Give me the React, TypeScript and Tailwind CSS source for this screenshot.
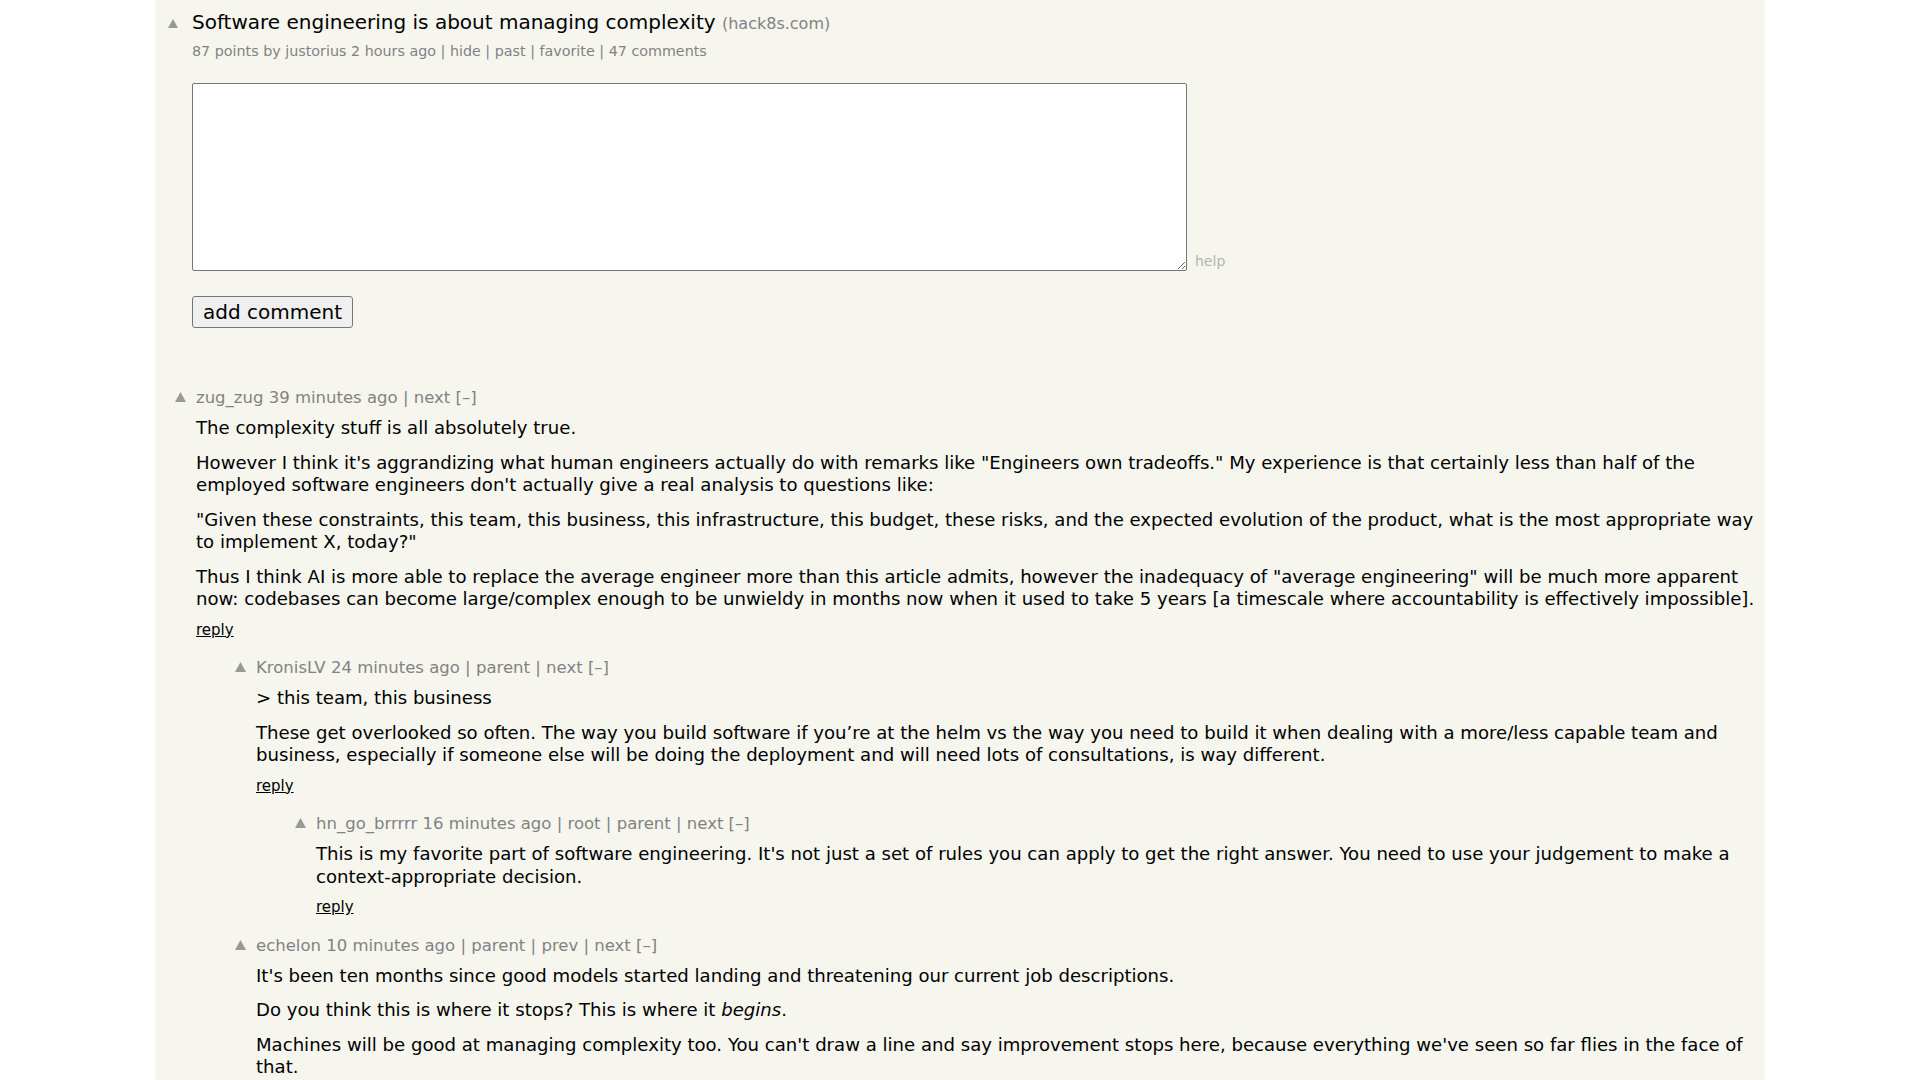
import React from 'react';

type Comment = {
  user: string;
  age: string;
  links: string[];
  level: number;
  paras: React.ReactNode[];
};

const comments: Comment[] = [
  {
    user: 'zug_zug',
    age: '39 minutes ago',
    links: ['next [–]'],
    level: 0,
    paras: [
      'The complexity stuff is all absolutely true.',
      'However I think it\'s aggrandizing what human engineers actually do with remarks like "Engineers own tradeoffs." My experience is that certainly less than half of the employed software engineers don\'t actually give a real analysis to questions like:',
      '"Given these constraints, this team, this business, this infrastructure, this budget, these risks, and the expected evolution of the product, what is the most appropriate way to implement X, today?"',
      'Thus I think AI is more able to replace the average engineer more than this article admits, however the inadequacy of "average engineering" will be much more apparent now: codebases can become large/complex enough to be unwieldy in months now when it used to take 5 years [a timescale where accountability is effectively impossible].',
    ],
  },
  {
    user: 'KronisLV',
    age: '24 minutes ago',
    links: ['parent', 'next [–]'],
    level: 1,
    paras: [
      '> this team, this business',
      'These get overlooked so often. The way you build software if you’re at the helm vs the way you need to build it when dealing with a more/less capable team and business, especially if someone else will be doing the deployment and will need lots of consultations, is way different.',
    ],
  },
  {
    user: 'hn_go_brrrrr',
    age: '16 minutes ago',
    links: ['root', 'parent', 'next [–]'],
    level: 2,
    paras: [
      "This is my favorite part of software engineering. It's not just a set of rules you can apply to get the right answer. You need to use your judgement to make a context-appropriate decision.",
    ],
  },
  {
    user: 'echelon',
    age: '10 minutes ago',
    links: ['parent', 'prev', 'next [–]'],
    level: 1,
    paras: [
      "It's been ten months since good models started landing and threatening our current job descriptions.",
      <>
        Do you think this is where it stops? This is where it <i>begins</i>.
      </>,
      "Machines will be good at managing complexity too. You can't draw a line and say improvement stops here, because everything we've seen so far flies in the face of that.",
    ],
  },
];

const indents: Record<number, string> = {
  0: 'pl-[20px]',
  1: 'pl-[80px]',
  2: 'pl-[140px]',
};

const VoteArrow: React.FC<{ small?: boolean }> = ({ small }) => (
  <svg
    width={small ? 10 : 11}
    height={small ? 9 : 10}
    viewBox="0 0 10 9"
    className="block"
  >
    <polygon points="5,0 10,9 0,9" fill="#999999" />
  </svg>
);

const CommentRow: React.FC<{ c: Comment }> = ({ c }) => (
  <div className={`flex ${indents[c.level]} mb-[19px]`}>
    <div className="w-[11px] shrink-0 pt-[4px]">
      <VoteArrow />
    </div>
    <div className="ml-[10px] flex-1 pr-[3px]">
      <div className="text-[16.5px] leading-[19px] text-[#828282]">
        {c.user} {c.age}
        {c.links.map((l) => (
          <span key={l}> | {l}</span>
        ))}
      </div>
      <div className="mt-[10px] text-[18.1px] leading-[22.5px] text-black">
        {c.paras.map((p, i) => (
          <p key={i} className={i === 0 ? '' : 'mt-[12px]'}>
            {p}
          </p>
        ))}
      </div>
      <div className="mt-[11px] text-[15px] leading-[17.5px] text-black underline">
        reply
      </div>
    </div>
  </div>
);

const App: React.FC = () => {
  return (
    <div className="min-h-screen bg-white font-['DejaVu_Sans',Verdana,sans-serif]">
      <div className="mx-auto w-[1610px] min-h-screen bg-[#f6f6ef] pt-[11px]">
        {/* Story title */}
        <div className="flex items-center pl-[13px]">
          <div className="w-[10px] shrink-0">
            <VoteArrow small />
          </div>
          <div className="ml-[14px] text-[20px] leading-[23px] text-black">
            Software engineering is about managing complexity{' '}
            <span className="text-[16px] text-[#828282]">(hack8s.com)</span>
          </div>
        </div>
        <div className="mt-[8px] pl-[37px] text-[14.3px] leading-[16px] text-[#828282]">
          87 points by justorius 2 hours ago | hide | past | favorite | 47 comments
        </div>

        {/* Reply form */}
        <div className="pl-[37px]">
          <div className="mt-[24px] flex items-end">
            <textarea className="block w-[995px] h-[188px] resize border border-[#767676] rounded-[2px] bg-white" />
            <span className="ml-[8px] mb-[2px] text-[14px] leading-[16px] text-[#b4b4b4]">help</span>
          </div>
          <button className="mt-[25px] h-[32px] px-[10px] border border-[#767676] rounded-[3px] bg-[#efefef] text-[20px] leading-[23px] text-black">
            add comment
          </button>
        </div>

        {/* Comments */}
        <div className="mt-[60px]">
          {comments.map((c) => (
            <CommentRow key={c.user} c={c} />
          ))}
        </div>
      </div>
    </div>
  );
};

export default App;
